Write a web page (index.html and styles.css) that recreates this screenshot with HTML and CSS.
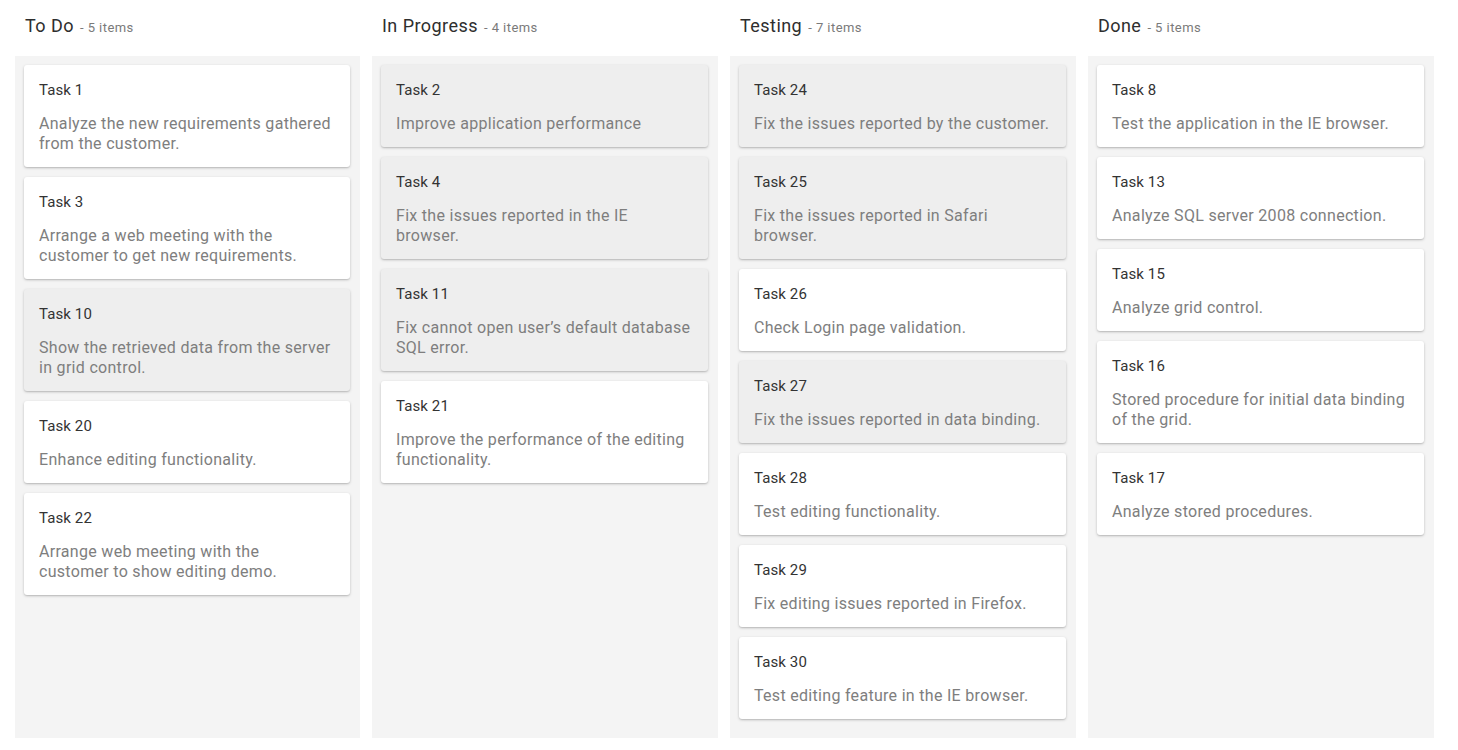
FILE: index.html
```html
<!DOCTYPE html>
<html>
<head>
<meta charset="utf-8">
<link rel="stylesheet" href="styles.css">
</head>
<body>
<div class="board">
  <div class="lane">
    <div class="lane-head"><span class="lane-title">To Do</span><span class="lane-count">- 5 items</span></div>
    <div class="lane-body">
      <div class="card"><div class="card-title">Task 1</div><div class="card-text">Analyze the new requirements gathered from the customer.</div></div>
      <div class="card"><div class="card-title">Task 3</div><div class="card-text">Arrange a web meeting with the customer to get new requirements.</div></div>
      <div class="card card-muted"><div class="card-title">Task 10</div><div class="card-text">Show the retrieved data from the server in grid control.</div></div>
      <div class="card"><div class="card-title">Task 20</div><div class="card-text">Enhance editing functionality.</div></div>
      <div class="card"><div class="card-title">Task 22</div><div class="card-text">Arrange web meeting with the<br>customer to show editing demo.</div></div>
    </div>
  </div>
  <div class="lane">
    <div class="lane-head"><span class="lane-title">In Progress</span><span class="lane-count">- 4 items</span></div>
    <div class="lane-body">
      <div class="card card-muted"><div class="card-title">Task 2</div><div class="card-text">Improve application performance</div></div>
      <div class="card card-muted"><div class="card-title">Task 4</div><div class="card-text">Fix the issues reported in the IE browser.</div></div>
      <div class="card card-muted"><div class="card-title">Task 11</div><div class="card-text">Fix cannot open user’s default database SQL error.</div></div>
      <div class="card"><div class="card-title">Task 21</div><div class="card-text">Improve the performance of the editing functionality.</div></div>
    </div>
  </div>
  <div class="lane">
    <div class="lane-head"><span class="lane-title">Testing</span><span class="lane-count">- 7 items</span></div>
    <div class="lane-body">
      <div class="card card-muted"><div class="card-title">Task 24</div><div class="card-text">Fix the issues reported by the customer.</div></div>
      <div class="card card-muted"><div class="card-title">Task 25</div><div class="card-text">Fix the issues reported in Safari browser.</div></div>
      <div class="card"><div class="card-title">Task 26</div><div class="card-text">Check Login page validation.</div></div>
      <div class="card card-muted"><div class="card-title">Task 27</div><div class="card-text">Fix the issues reported in data binding.</div></div>
      <div class="card"><div class="card-title">Task 28</div><div class="card-text">Test editing functionality.</div></div>
      <div class="card"><div class="card-title">Task 29</div><div class="card-text">Fix editing issues reported in Firefox.</div></div>
      <div class="card"><div class="card-title">Task 30</div><div class="card-text">Test editing feature in the IE browser.</div></div>
    </div>
  </div>
  <div class="lane">
    <div class="lane-head"><span class="lane-title">Done</span><span class="lane-count">- 5 items</span></div>
    <div class="lane-body">
      <div class="card"><div class="card-title">Task 8</div><div class="card-text">Test the application in the IE browser.</div></div>
      <div class="card"><div class="card-title">Task 13</div><div class="card-text">Analyze SQL server 2008 connection.</div></div>
      <div class="card"><div class="card-title">Task 15</div><div class="card-text">Analyze grid control.</div></div>
      <div class="card"><div class="card-title">Task 16</div><div class="card-text">Stored procedure for initial data binding of the grid.</div></div>
      <div class="card"><div class="card-title">Task 17</div><div class="card-text">Analyze stored procedures.</div></div>
    </div>
  </div>
</div>
</body>
</html>
```
FILE: styles.css
```css
html, body {
  margin: 0;
  padding: 0;
  background: #ffffff;
}
body {
  font-family: Roboto, "Liberation Sans", sans-serif;
}
.board {
  display: grid;
  grid-template-columns: 345px 346px 346px 346px;
  column-gap: 12px;
  padding-left: 15px;
  height: 738px;
}
.lane {
  display: flex;
  flex-direction: column;
  min-height: 0;
}
.lane-head {
  height: 56px;
  box-sizing: border-box;
  padding: 15px 10px 0 10px;
  line-height: 22px;
  white-space: nowrap;
}
.lane-title {
  font-size: 18px;
  letter-spacing: 0.45px;
  color: #2e2e2e;
}
.lane-count {
  font-size: 13px;
  letter-spacing: 0.45px;
  color: #7a7a7a;
  margin-left: 6px;
}
.lane-body {
  flex: 1;
  background: #f4f4f4;
  padding: 9px 10px 0 9px;
  display: flex;
  flex-direction: column;
  gap: 10px;
}
.card {
  background: #ffffff;
  border-radius: 3px;
  box-shadow: 0 1px 3px rgba(0, 0, 0, 0.2), 0 1px 1px rgba(0, 0, 0, 0.08);
  padding: 15px 15px 13px 15px;
}
.card-muted {
  background: #eeeeee;
}
.card-title {
  font-size: 15px;
  letter-spacing: 0.1px;
  line-height: 20px;
  color: #333333;
}
.card-text {
  margin-top: 14px;
  font-size: 16px;
  letter-spacing: 0.3px;
  line-height: 20px;
  color: #7e7e7e;
}
```
